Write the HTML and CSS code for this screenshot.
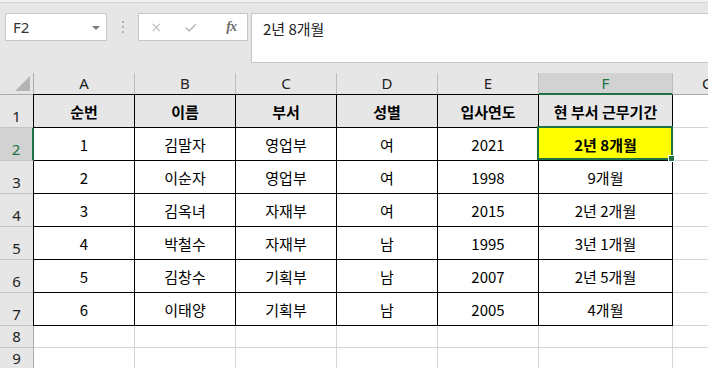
FILE: index.html
```html
<html>
	<head>
		<title>근무기간</title>
		<link rel="stylesheet" href="styles.css">
	</head>
	<body>
		<div class="topline"></div>
		<div class="fbar">
			<div class="namebox">
				<span>F2</span>
				<svg class="drop" width="8" height="4" viewBox="0 0 8 4"><path d="M0 0h8L4 4z" fill="#7a7a7a"/></svg>
			</div>
			<div class="dots"><i></i><i></i><i></i></div>
			<div class="btns">
				<svg width="11" height="11" viewBox="0 0 11 11"><path d="M1 1l9 9M10 1l-9 9" stroke="#b8b8b8" stroke-width="1.4"/></svg>
				<svg width="15" height="11" viewBox="0 0 15 11"><path d="M1 5.5l4.5 4.5L14 1" fill="none" stroke="#b8b8b8" stroke-width="1.8"/></svg>
				<span class="fx">fx</span>
			</div>
			<div class="finput">2년 8개월</div>
		</div>

		<div class="sheet">
			<!-- column headers -->
			<div class="corner"><svg width="15" height="15" viewBox="0 0 15 15"><path d="M0 15L15 0v15z" fill="#b4b4b4"/></svg></div>
			<div class="hd">A</div>
			<div class="hd">B</div>
			<div class="hd">C</div>
			<div class="hd">D</div>
			<div class="hd">E</div>
			<div class="hd hd-sel">F</div>
			<div class="hd">G</div>

			<!-- row 1 -->
			<div class="rh">1</div>
			<div class="c t th tl tt">순번</div>
			<div class="c t th tt">이름</div>
			<div class="c t th tt">부서</div>
			<div class="c t th tt">성별</div>
			<div class="c t th tt">입사연도</div>
			<div class="c t th">현 부서 근무기간</div>
			<div class="c"></div>

			<!-- row 2 -->
			<div class="rh rh-sel">2</div>
			<div class="c t">1</div>
			<div class="c t">김말자</div>
			<div class="c t">영업부</div>
			<div class="c t">여</div>
			<div class="c t">2021</div>
			<div class="c t active"><b>2년 8개월</b><span class="selbox"></span><span class="handle"></span></div>
			<div class="c"></div>

			<!-- row 3 -->
			<div class="rh">3</div>
			<div class="c t tl">2</div>
			<div class="c t">이순자</div>
			<div class="c t">영업부</div>
			<div class="c t">여</div>
			<div class="c t">1998</div>
			<div class="c t">9개월</div>
			<div class="c"></div>

			<!-- row 4 -->
			<div class="rh">4</div>
			<div class="c t tl">3</div>
			<div class="c t">김옥녀</div>
			<div class="c t">자재부</div>
			<div class="c t">여</div>
			<div class="c t">2015</div>
			<div class="c t">2년 2개월</div>
			<div class="c"></div>

			<!-- row 5 -->
			<div class="rh">5</div>
			<div class="c t tl">4</div>
			<div class="c t">박철수</div>
			<div class="c t">자재부</div>
			<div class="c t">남</div>
			<div class="c t">1995</div>
			<div class="c t">3년 1개월</div>
			<div class="c"></div>

			<!-- row 6 -->
			<div class="rh">6</div>
			<div class="c t tl">5</div>
			<div class="c t">김창수</div>
			<div class="c t">기획부</div>
			<div class="c t">남</div>
			<div class="c t">2007</div>
			<div class="c t">2년 5개월</div>
			<div class="c"></div>

			<!-- row 7 -->
			<div class="rh">7</div>
			<div class="c t tl">6</div>
			<div class="c t">이태양</div>
			<div class="c t">기획부</div>
			<div class="c t">남</div>
			<div class="c t">2005</div>
			<div class="c t">4개월</div>
			<div class="c"></div>

			<!-- row 8 -->
			<div class="rh">8</div>
			<div class="c"></div>
			<div class="c"></div>
			<div class="c"></div>
			<div class="c"></div>
			<div class="c"></div>
			<div class="c"></div>
			<div class="c"></div>

			<!-- row 9 -->
			<div class="rh">9</div>
			<div class="c"></div>
			<div class="c"></div>
			<div class="c"></div>
			<div class="c"></div>
			<div class="c"></div>
			<div class="c"></div>
			<div class="c"></div>
		</div>
	</body>
</html>
```

FILE: styles.css
```css
/* Excel-like sheet */
body {
	margin: 0;
	width: 708px;
	height: 368px;
	overflow: hidden;
	background: #e6e6e6;
	font-family: "Noto Sans", "Noto Sans CJK KR", sans-serif;
	color: #000;
}

.topline {
	height: 2px;
	background: #f1f1f1;
	border-bottom: 1px solid #d4d4d4;
}

/* formula bar */
.fbar {
	display: flex;
	align-items: flex-start;
	height: 60px;
	padding-top: 10px;
	padding-left: 5px;
}

.namebox {
	box-sizing: border-box;
	width: 102px;
	height: 28px;
	background: #fff;
	border: 1px solid #c6c6c6;
	display: flex;
	align-items: center;
	justify-content: space-between;
	padding: 0 6px 0 7px;
	font-size: 15px;
	color: #333;
}

.drop {
	margin-top: 1px;
}

.dots {
	width: 2px;
	margin: 8px 14px 0 15px;
	display: flex;
	flex-direction: column;
	gap: 3px;
}

.dots i {
	display: block;
	width: 2px;
	height: 2px;
	background: #b0b0b0;
}

.btns {
	box-sizing: border-box;
	width: 110px;
	height: 28px;
	background: #fff;
	border: 1px solid #c6c6c6;
	display: flex;
	align-items: center;
	padding: 0 11px 0 13px;
	gap: 24px;
}

.fx {
	font-family: "Liberation Serif", serif;
	font-style: italic;
	font-weight: bold;
	font-size: 14px;
	color: #6e6e6e;
	margin-left: 6px;
	letter-spacing: -1px;
}

.finput {
	box-sizing: border-box;
	flex: 1;
	height: 50px;
	margin-left: 3px;
	background: #fff;
	border: 1px solid #c6c6c6;
	border-right: none;
	padding: 4px 0 0 11px;
	font-family: "Noto Sans CJK KR", sans-serif;
	font-size: 15px;
	color: #222;
}

/* grid */
.sheet {
	display: grid;
	grid-template-columns: 34px repeat(5, 101px) 134px 70px;
	grid-template-rows: 22px repeat(7, 33px) 22px 22px;
	background: #fff;
	font-family: "Noto Sans CJK KR", sans-serif;
	font-size: 15px;
}

.sheet > div {
	box-sizing: border-box;
}

.corner {
	background: #e6e6e6;
	border-right: 1px solid #ababab;
	border-bottom: 1px solid #ababab;
	display: flex;
	align-items: flex-end;
	justify-content: flex-end;
	padding: 0 3px 3px 0;
}

.hd {
	background: #e6e6e6;
	border-right: 1px solid #bcbcbc;
	border-bottom: 1px solid #ababab;
	display: flex;
	align-items: center;
	justify-content: center;
	font-family: "Noto Sans", sans-serif;
	font-size: 15px;
	color: #222;
	padding-bottom: 1px;
}

.hd-sel {
	background: #d2d2d2;
	border-bottom: 2px solid #217346;
	color: #217346;
	padding-bottom: 0;
}

.rh {
	background: #e6e6e6;
	border-right: 1px solid #ababab;
	border-bottom: 1px solid #c4c4c4;
	display: flex;
	align-items: flex-end;
	justify-content: center;
	font-family: "Noto Sans", sans-serif;
	font-size: 15px;
	color: #222;
	padding-bottom: 1px;
}

.rh-sel {
	background: #d2d2d2;
	border-right: 2px solid #217346;
	color: #217346;
}

.c {
	border-right: 1px solid #d4d4d4;
	border-bottom: 1px solid #d4d4d4;
	display: flex;
	align-items: center;
	justify-content: center;
	white-space: nowrap;
}

.t {
	border-right-color: #000;
	border-bottom-color: #000;
}

.th {
	background: #e7e6e6;
	font-weight: bold;
}

.tl {
	box-shadow: -1px 0 0 #000;
}

.tt {
	box-shadow: 0 -1px 0 #000;
}

.tl.tt {
	box-shadow: -1px 0 0 #000, 0 -1px 0 #000, -1px -1px 0 #000;
}

.active {
	position: relative;
	background: #ffff00;
}

.selbox {
	position: absolute;
	top: -2px;
	left: -2px;
	right: -1px;
	bottom: 0;
	border: 2px solid #217346;
}

.handle {
	position: absolute;
	right: -3px;
	bottom: -2px;
	width: 5px;
	height: 5px;
	background: #217346;
	border: 1px solid #fff;
}
```
